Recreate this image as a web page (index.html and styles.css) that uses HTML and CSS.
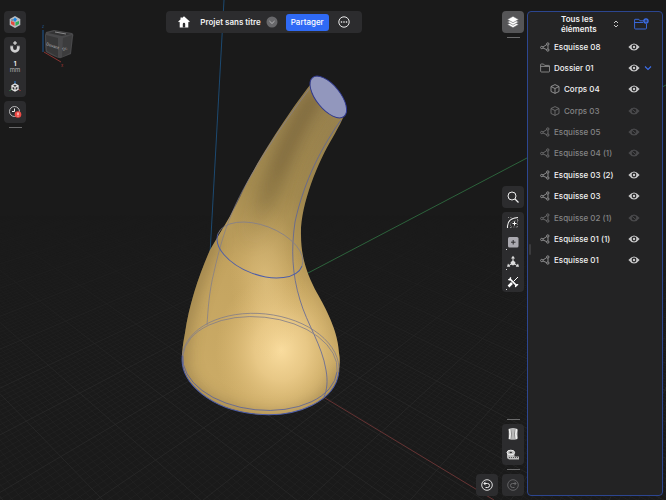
FILE: index.html
```html
<!DOCTYPE html>
<html lang="fr">
<head>
<meta charset="utf-8">
<title>Projet sans titre</title>
<link rel="stylesheet" href="styles.css">
</head>
<body>
<svg class="scene" viewBox="0 0 666 500" preserveAspectRatio="xMidYMid slice" aria-hidden="true">
  <defs>
    <linearGradient id="fade" x1="0" y1="215" x2="0" y2="390" gradientUnits="userSpaceOnUse">
      <stop offset="0" stop-color="#000"/><stop offset="1" stop-color="#fff"/>
    </linearGradient>
    <mask id="gridMask" maskUnits="userSpaceOnUse" x="0" y="0" width="666" height="500"><rect width="666" height="500" fill="url(#fade)"/></mask>
    <linearGradient id="gold" x1="330" y1="90" x2="255" y2="400" gradientUnits="userSpaceOnUse">
      <stop offset="0" stop-color="#998350"/><stop offset=".35" stop-color="#a58c51"/><stop offset=".6" stop-color="#c4a460"/><stop offset="1" stop-color="#cbab66"/>
    </linearGradient>
    <radialGradient id="shine"><stop offset="0" stop-color="#fadd9f"/><stop offset=".4" stop-color="#f2d291" stop-opacity=".75"/><stop offset="1" stop-color="#e0bd76" stop-opacity="0"/></radialGradient>
    <linearGradient id="core" x1="310" y1="90" x2="225" y2="270" gradientUnits="userSpaceOnUse">
      <stop offset="0" stop-color="#6f5c34"/><stop offset=".4" stop-color="#6f5c34"/><stop offset=".85" stop-color="#6f5c34" stop-opacity="0"/>
    </linearGradient>
    <filter id="soft" filterUnits="userSpaceOnUse" x="140" y="50" width="240" height="400"><feGaussianBlur stdDeviation="8"/></filter>
    <path id="hornShape" d="M310 85C292 108 255 163 240 197C231 216 219 234 210 250C199 275 189 305 185 333C183 343 182 351 182 359A78.700 50.300 6 0 0 339 369C340 362 340 358 339 353C338 331 326 309 317 293C308 276 301 259 301 235C300 207 317 163 333 137C338 128 343 119 345 113Z"/>
    <clipPath id="hornClip"><use href="#hornShape"/></clipPath>
  </defs>
  <g id="grid" mask="url(#gridMask)"></g>
  <path class="axis axis-z" d="M224 0L206 327"/>
  <path class="axis axis-y" d="M206 327L308 273L666 85"/>
  <path class="axis axis-x" d="M206 327L325 398L494 500"/>
  <use href="#hornShape" fill="url(#gold)"/>
  <g clip-path="url(#hornClip)">
    <path class="shade core" d="M318 92C292 130 278 170 264 205L240 270" stroke-width="18" opacity=".65"/>
    <path class="shade" d="M214 238C192 285 179 330 180 366C184 396 222 417 260 419C300 422 332 403 342 368" stroke-width="13" opacity=".55"/>
    <path class="shade" d="M342 118C312 160 298 204 304 252C312 282 334 303 341 345" stroke-width="4" opacity=".5"/>
    <ellipse cx="281" cy="350" rx="66" ry="76" fill="url(#shine)"/>
    <ellipse cx="266" cy="280" rx="36" ry="80" transform="rotate(-4 266 280)" fill="url(#shine)" opacity=".35"/>
  </g>
  <g fill="none">
    <path class="edge-back" d="M310 88C288 117 255 164 236 204C225 227 219 250 214 272C209 292 208 310 207 325"/>
    <path class="edge-soft" d="M341 120C316 155 302 190 295 222C291 249 292 274 300 300C307 324 322 345 326 370C328 381 327 390 324 397"/>
    <g transform="rotate(21 260 250)"><path class="edge-back" d="M215 250A45 24.5 0 0 1 305 250"/><path class="edge" d="M305 250A45 24.5 0 0 1 215 250"/></g>
    <g transform="rotate(6 260.500 364)"><path class="edge-back" d="M181.800 364A78.700 50.300 0 0 1 339.200 364"/><path class="edge" d="M339.200 364A78.700 50.300 0 0 1 181.800 364"/></g>
    <g transform="rotate(6 260 363.500)"><path class="edge-back" d="M182.500 363.500A77.500 46.500 0 0 1 337.500 363.500"/><path class="edge-soft" d="M337.500 363.500A77.500 46.500 0 0 1 182.500 363.500"/></g>
  </g>
  <ellipse class="cap" cx="328.300" cy="97" rx="25" ry="12" transform="rotate(51 328.300 97)"/>
  <g class="cube">
    <path d="M43 30V52" stroke="#1d5794"/><path d="M44 52L61 62" stroke="#8c3431"/>
    <path d="M46 32L54 30L72 33Q74 34 73 37L71 54L61 58Q58 59 46 52Q45 51 45 35Z" fill="#48484a"/>
    <path d="M46 35L58 38V57L47 51Z" fill="#373738"/><path d="M63 38L72 35L70 53L62 57Z" fill="#3c3c3d"/><path d="M48 33L55 31L71 34L62 36Z" fill="#333334"/>
    <path d="M55 32L66 34" stroke="#8a8a8b"/>
    <text x="46" y="45" transform="rotate(19 46 45)">Devant</text><text x="63" y="51" transform="rotate(-22 63 51)">Dr.</text>
    <text class="z" x="42" y="28">z</text><text class="x" x="61" y="67">x</text>
  </g>
</svg>

<svg class="sprite" aria-hidden="true">
  <symbol id="eye" viewBox="0 0 12 8"><path d="M.4 4Q6-3.200 11.600 4Q6 11.200.4 4Z" fill="currentColor"/><circle cx="6" cy="4" r="2.400" fill="#232324"/><circle cx="6" cy="4" r="1.200" fill="currentColor"/></symbol>
  <symbol id="eye-off" viewBox="0 0 12 8"><path d="M.4 4Q6-3.200 11.600 4Q6 11.200.4 4Z" fill="currentColor"/><circle cx="6" cy="4" r="2.300" fill="#232324"/><path d="M3 1.500L9 6.500" stroke="currentColor" stroke-width="1"/></symbol>
  <symbol id="sketch" viewBox="0 0 10 10"><g fill="none" stroke="currentColor" stroke-width=".9"><circle cx="1.800" cy="5.500" r="1.200"/><circle cx="7.800" cy="2" r="1.200"/><circle cx="7.800" cy="8" r="1.200"/><path d="M3 5L6.700 2.600M3 6L6.600 7.600M8 3.300V6.700"/></g></symbol>
  <symbol id="body" viewBox="0 0 10 10"><path d="M5 .6L9 2.500V7.500L5 9.400L1 7.500V2.500ZM1 2.500L5 4.500L9 2.500M5 4.500V9.400" fill="none" stroke="currentColor" stroke-width=".9" stroke-linejoin="round"/></symbol>
  <symbol id="folder" viewBox="0 0 10 10"><path d="M.6 8V1.500Q.6 1 1.200 1H3.500L4.700 2.400H8.800Q9.500 2.400 9.500 3V8.300Q9.500 9 8.800 9H1.400Q.6 9 .6 8ZM.6 3.400H9" fill="none" stroke="currentColor" stroke-width=".8"/></symbol>
</svg>

<div class="app">
  <main class="viewport">
    <nav class="rail" aria-label="Outils de vue">
      <div class="card"><button class="tool" aria-label="Application"><svg viewBox="0 0 14 14"><path d="M7 1L12.300 4V10L7 13L1.700 10V4Z" fill="#b9bcc0"/><path d="M7 2.500L9 4.500L7 7L5 4.500Z" fill="#1786e8"/><path d="M3 6L6.500 7.300V11L3 9Z" fill="#e6483f"/><path d="M11 6L7.500 7.300V11L11 9Z" fill="#30ad59"/><path d="M3 4.500L5 4L6 6.500L3 5.500Z" fill="#7e8994"/></svg></button></div>
      <div class="card spaced">
        <button class="tool" aria-label="Aimantation"><svg viewBox="0 0 14 14"><path d="M3.700 5V8A3.300 3.300 0 0 0 10.300 8V5" fill="none" stroke="#d0d0d1" stroke-width="2.800"/><path d="M2 5.700H5.300M8.700 5.700H12" stroke="#38383a"/><path d="M7 1V5M5 3H9" stroke="#fff" stroke-width=".9"/></svg></button>
        <button class="tool unit"><b>1</b><span>mm</span></button>
        <button class="tool" aria-label="Orientation"><svg viewBox="0 0 14 14" fill="none"><path d="M7 1V4" stroke="#2b83dc"/><path d="M3.500 9L1.500 11" stroke="#3a9c55"/><path d="M10.500 9L12.500 11" stroke="#b8413b"/><path d="M7 4L10 5.700V9.300L7 11L4 9.300V5.700ZM4 5.700L7 7.500L10 5.700M7 7.500V11" stroke="#e2e2e2" stroke-width="1.300"/></svg></button>
      </div>
      <div class="card"><button class="tool" aria-label="Historique"><svg viewBox="0 0 14 14"><circle cx="6.500" cy="6.500" r="5" fill="none" stroke="#c8c8c9" stroke-width=".9"/><path d="M6.500 3.500V6.500H4" fill="none" stroke="#eee"/><circle cx="10" cy="9.500" r="3.300" fill="#ef4a45"/><path d="M10 7.500V10M10 10.700V11.500" stroke="#fff"/></svg></button></div>
      <i class="grip"></i>
    </nav>

    <header class="topbar card">
      <button class="home" aria-label="Accueil"><svg viewBox="0 0 12 12"><path d="M6 .3L11.800 5.500L11 6.300L10.300 5.800V11.500H1.700V5.800L1 6.300L.2 5.500L2.500 3.400V1.500H4V2.100Z" fill="#fff"/><path d="M4.800 11.500V8A1.200 1.200 0 0 1 7.200 8V11.500Z" fill="#2c2c2e"/></svg></button>
      <h1>Projet sans titre</h1>
      <button class="more" aria-label="Menu du projet"><svg viewBox="0 0 12 12"><circle cx="6" cy="6" r="5.500" fill="#68686b"/><path d="M3.400 5L6 7.500L8.600 5" fill="none" stroke="#b7b7b9"/></svg></button>
      <button class="share">Partager</button>
      <button class="options" aria-label="Options"><svg viewBox="0 0 12 12"><circle cx="6" cy="6" r="5.200" fill="none" stroke="#fff" stroke-width=".9"/><g fill="#fff"><circle cx="3.500" cy="6" r=".8"/><circle cx="6" cy="6" r=".8"/><circle cx="8.500" cy="6" r=".8"/></g></svg></button>
    </header>

    <aside class="rail right" aria-label="Outils">
      <div class="stack">
        <div class="card active"><button class="tool" aria-label="Calques"><svg viewBox="0 0 14 14"><g fill="#fff" stroke="#58585a" stroke-width=".6"><path d="M7 6.500L12.700 9.500L7 12.700L1.300 9.500Z"/><path d="M7 4L12.700 7L7 10.200L1.300 7Z"/><path d="M7 1.300L12.700 4.500L7 7.700L1.300 4.500Z"/></g></svg></button></div>
        <i class="grip"></i>
      </div>
      <div class="stack middle">
        <div class="card"><button class="tool" aria-label="Rechercher"><svg viewBox="0 0 14 14"><circle cx="6" cy="6" r="4" fill="none" stroke="#eee"/><path d="M9 9L12.500 12.500" stroke="#eee" stroke-width="1.200"/></svg></button></div>
        <div class="card tools">
          <button class="tool" aria-label="Esquisse"><svg viewBox="0 0 14 14" fill="none"><path d="M1.500 13V11Q2 3 12 2.500" stroke="#eee" stroke-width="1.100"/><path d="M4.500 13V9Q5 6 12.500 5.500M2 2.500H6M11.500 4V13M5 12H12" stroke="#aaa" stroke-width=".8" stroke-dasharray="1 1.400"/><path d="M8.500 6.500V10.500M6.500 8.500H10.500" stroke="#fff"/></svg></button>
          <button class="tool menu" aria-label="Ajouter"><svg viewBox="0 0 14 14"><rect x="2" y="2" width="10.500" height="10.500" rx="1.500" fill="#aaa9b0"/><path d="M7.200 5V9.500M5 7.200H9.500" stroke="#2c2c2e"/></svg></button>
          <button class="tool menu" aria-label="Transformer"><svg viewBox="0 0 14 14"><path d="M7 3V8L3 10.500M7 8L11 10.500" fill="none" stroke="#ddd"/><path d="M7 .8L9 3.500H5ZM1 11.800L2 8.500L4.300 11.800ZM13 11.800L12 8.500L9.700 11.800ZM7 5.500L9.300 7V9.300L7 10.500L4.700 9.300V7Z" fill="#ddd"/></svg></button>
          <button class="tool menu" aria-label="Outils"><svg viewBox="0 0 14 14" fill="none" stroke="#fff"><path d="M3.500 3.500L11 11" stroke-width="1.700"/><path d="M2.200 4.500Q4.800 5.500 4.500 2.200M9.700 12.200Q9 9.300 12.200 9.700" stroke-width="1.300"/><path d="M12 2L7.500 6.500" stroke-width="1"/><path d="M6 8L2.500 11.500" stroke-width="2.500"/></svg></button>
        </div>
      </div>
      <div class="stack">
        <i class="grip"></i>
        <div class="card pair">
          <button class="tool" aria-label="Zébrures"><svg viewBox="0 0 14 14"><path d="M2.500 2Q7 .5 11.500 2Q10 7 11.500 12Q7 13.500 2.500 12Q4 7 2.500 2Z" fill="#eee"/><path d="M5 2Q6 7 5 12.500M7 2V13M9 2Q8 7 9 12.500" fill="none" stroke="#555" stroke-width=".7"/><path d="M2.500 4H4M2.500 6H4M2.500 8H4M2.500 10H4M10 4H12M10 6H12M10 8H12M10 10H12" stroke="#eee" stroke-width=".8"/></svg></button>
          <button class="tool" aria-label="Mesurer"><svg viewBox="0 0 14 14"><path d="M1 4.500V9Q1 11.500 5 11.500H13V8.500H8.500V4.500Z" fill="#bbb"/><ellipse cx="4.800" cy="4.500" rx="3.800" ry="2.300" fill="#bbb" stroke="#eee"/><ellipse cx="4.800" cy="4.500" rx="1.300" ry=".7" fill="#333"/><path d="M3 9.500H12.500" stroke="#555" stroke-dasharray="1 1"/></svg></button>
        </div>
        <i class="grip"></i>
        <div class="history">
          <div class="card"><button class="tool" aria-label="Annuler"><svg viewBox="0 0 14 14" fill="none" stroke="#eee"><circle cx="7" cy="7" r="5.300" stroke-width=".9"/><path d="M5.500 3.800L4 5.500L5.500 7.200M4 5.500H7.500A2 2 0 0 1 7.500 9.500H5.500"/></svg></button></div>
          <div class="card"><button class="tool" aria-label="Rétablir" disabled><svg viewBox="0 0 14 14" fill="none" stroke="#68686a"><circle cx="7" cy="7" r="5.300" stroke-width=".9"/><path d="M8.500 3.800L10 5.500L8.500 7.200M10 5.500H6.500A2 2 0 0 0 6.500 9.500H8.500"/></svg></button></div>
        </div>
      </div>
    </aside>
  </main>

  <aside class="panel" aria-label="Éléments">
    <i class="resize"></i>
    <div class="panel-head">
      <button class="filter"><span>Tous les éléments</span><svg viewBox="0 0 6 8"><path d="M1 3L3 1L5 3M1 5L3 7L5 5" fill="none" stroke="#ddd" stroke-width=".9"/></svg></button>
      <button class="add" aria-label="Nouveau dossier"><svg viewBox="0 0 15 12"><path d="M10 2.800H6L4.800 1.300H1Q.6 1.300.6 2V10Q.6 11 1.500 11H11.500Q12.500 11 12.500 10V6M.6 4.500H9" fill="none" stroke="#3c6fec" stroke-width=".9"/><circle cx="12" cy="3" r="2.700" fill="#3c6fec"/><path d="M12 1.500V4.500M10.500 3H13.500" stroke="#232324" stroke-width=".7"/></svg></button>
    </div>
    <ul class="items">
      <li><svg class="kind"><use href="#sketch"/></svg><span>Esquisse 08</span><button class="see" aria-label="Masquer"><svg><use href="#eye"/></svg></button></li>
      <li><svg class="kind"><use href="#folder"/></svg><span>Dossier 01</span><button class="see" aria-label="Masquer"><svg><use href="#eye"/></svg></button><button class="fold" aria-label="Replier"><svg viewBox="0 0 8 6"><path d="M1 1.500L4 4.500L7 1.500" fill="none" stroke="#3c6fec" stroke-width="1.100"/></svg></button></li>
      <li class="child"><svg class="kind"><use href="#body"/></svg><span>Corps 04</span><button class="see" aria-label="Masquer"><svg><use href="#eye"/></svg></button></li>
      <li class="child off"><svg class="kind"><use href="#body"/></svg><span>Corps 03</span><button class="see" aria-label="Afficher"><svg><use href="#eye-off"/></svg></button></li>
      <li class="off"><svg class="kind"><use href="#sketch"/></svg><span>Esquisse 05</span><button class="see" aria-label="Afficher"><svg><use href="#eye-off"/></svg></button></li>
      <li class="off"><svg class="kind"><use href="#sketch"/></svg><span>Esquisse 04 (1)</span><button class="see" aria-label="Afficher"><svg><use href="#eye-off"/></svg></button></li>
      <li><svg class="kind"><use href="#sketch"/></svg><span>Esquisse 03 (2)</span><button class="see" aria-label="Masquer"><svg><use href="#eye"/></svg></button></li>
      <li><svg class="kind"><use href="#sketch"/></svg><span>Esquisse 03</span><button class="see" aria-label="Masquer"><svg><use href="#eye"/></svg></button></li>
      <li class="off"><svg class="kind"><use href="#sketch"/></svg><span>Esquisse 02 (1)</span><button class="see" aria-label="Afficher"><svg><use href="#eye-off"/></svg></button></li>
      <li><svg class="kind"><use href="#sketch"/></svg><span>Esquisse 01 (1)</span><button class="see" aria-label="Masquer"><svg><use href="#eye"/></svg></button></li>
      <li><svg class="kind"><use href="#sketch"/></svg><span>Esquisse 01</span><button class="see" aria-label="Masquer"><svg><use href="#eye"/></svg></button></li>
    </ul>
  </aside>
</div>
<script src="grid.js"></script>
</body>
</html>
```
FILE: styles.css
```css
* { box-sizing: border-box; }
body {
  margin: 0;
  background: #1a1a1a;
  color: #f2f2f2;
  font-family: Inter, "Liberation Sans", sans-serif;
  font-size: 8px;
  line-height: 10px;
  overflow: hidden;
}
button {
  display: flex;
  align-items: center;
  justify-content: center;
  padding: 0;
  border: 0;
  background: none;
  color: inherit;
  font: inherit;
}
svg { display: block; }
.sprite { position: absolute; width: 0; height: 0; }

/* 3D scene behind the interface */
.scene { position: absolute; inset: 0; width: 100%; height: 100%; }
.minor { stroke: #262627; stroke-width: 0.5; }
.major { stroke: #29292a; stroke-width: 0.8; }
.axis { fill: none; stroke-width: 0.9; }
.axis-x { stroke: #6e3636; }
.axis-y { stroke: #2f6b3f; }
.axis-z { stroke: #1d4f7a; }
.shade { fill: none; stroke: #6f5c34; filter: url(#soft); }
.core { stroke: url(#core); }
.edge { stroke: #4d5da9; stroke-width: 1; }
.edge-soft { stroke: #5c639b; stroke-width: 0.8; }
.edge-back { stroke: #857f88; stroke-width: 0.8; }
.cap { fill: #9297bd; stroke: #303990; stroke-width: 1; }
.cube text { fill: #b5b5b6; font-size: 4px; }
.cube text.z { fill: #24609c; }
.cube text.x { fill: #a33b38; }

.app {
  position: relative;
  display: grid;
  grid-template-columns: 1fr 136px;
  height: 100vh;
  padding: 11px 3px 4px 4px;
}
.viewport {
  display: grid;
  grid-template-columns: 22px 1fr 22px;
  align-items: start;
  padding-right: 3px;
}
.card { border-radius: 4px; background: #2c2c2e; }
.active { background: #555557; }
.rail, .stack { display: flex; flex-direction: column; gap: 4px; }
.rail { align-items: center; }
.tool { position: relative; width: 22px; height: 22px; }
.tool svg { width: 14px; height: 14px; }
.spaced { height: 60px; }
.spaced .tool { height: 20px; }
.unit { flex-direction: column; font-size: 6px; line-height: 6px; }
.unit span { color: #b5b5b6; }
.grip { width: 13px; height: 1px; background: #6a6a6b; }

.topbar {
  justify-self: center;
  display: flex;
  align-items: center;
  height: 22px;
  padding: 0 12px;
}
.topbar svg { width: 12px; height: 12px; }
.topbar h1 { margin: 0 5px 0 10px; font-size: 8px; line-height: 10px; font-weight: 600; }
.share {
  height: 17px;
  margin: 0 9px 0 8px;
  padding: 0 5px;
  border-radius: 3px;
  background: #2f6af5;
  color: #fff;
  font-weight: 500;
}

.right { height: 100%; justify-content: space-between; }
.right .stack { align-items: center; width: 22px; }
.right .middle { margin-top: 20px; }
.tools { display: grid; height: 80px; }
.tools .tool { height: 20px; }
.menu::before {
  content: "";
  position: absolute;
  left: 4px;
  bottom: 2px;
  width: 1px;
  height: 1px;
  background: #ddd;
}
.pair { display: grid; height: 41px; }
.pair .tool { height: 20px; }
.history { display: flex; gap: 4px; align-self: flex-end; }

.panel {
  position: relative;
  border: 1px solid #2c4690;
  border-radius: 4px;
  background: #232324;
}
.resize { position: absolute; left: 1px; top: 48%; width: 2px; height: 11px; border-radius: 1px; background: #3b3b3d; }
.panel-head { display: flex; align-items: center; justify-content: space-between; height: 24px; padding: 0 13px 0 33px; }
.filter { gap: 7px; font-weight: 600; text-align: left; }
.filter span { width: 45px; }
.filter svg { width: 6px; height: 8px; }
.add svg { width: 15px; height: 12px; }
.items { display: grid; grid-auto-rows: 1fr; height: 235px; margin: 0; padding: 0; list-style: none; }
.items li {
  display: grid;
  grid-template-columns: 10px 1fr 12px 8px;
  column-gap: 4px;
  align-items: center;
  padding: 0 10px 0 12px;
  font-weight: 500;
}
.items .child { padding-left: 22px; }
.kind { width: 10px; height: 10px; color: #9a9a9b; }
.see { color: #c9c9ca; }
.see svg { width: 12px; height: 8px; }
.fold svg { width: 8px; height: 6px; }
.items .off { color: #838385; }
.off .kind { color: #707072; }
.off .see { color: #4a4a4c; }
```
FILE: grid.js
```js
// Ground plane: project grid coordinates (u, v) onto the scene.
const depth = (u, v) => 1 - 0.0506 * u + 0.053 * v;
const project = (u, v) => [
  (24 * u + 46.3 * v + 206) / depth(u, v),
  (4.9 * u - 1.2 * v + 327) / depth(u, v)
];
const grid = document.getElementById("grid");

function line(from, to, major) {
  const el = document.createElementNS("http://www.w3.org/2000/svg", "line");
  const [x1, y1] = project(...from);
  const [x2, y2] = project(...to);
  Object.entries({ x1, y1, x2, y2 }).forEach(([k, n]) => el.setAttribute(k, n));
  el.setAttribute("class", major ? "major" : "minor");
  grid.append(el);
}

for (let i = -120; i <= 400; i++) {
  const k = i / 10;
  const major = i % 10 === 0;
  // Stop where the plane passes behind the camera.
  line([-40, k], [Math.min(40, (0.8 + 0.053 * k) / 0.0506), k], major);
}
for (let i = -300; i <= 200; i++) {
  const k = i / 10;
  const major = i % 10 === 0;
  line([k, Math.max(-40, (-0.8 + 0.0506 * k) / 0.053)], [k, 40], major);
}
```
